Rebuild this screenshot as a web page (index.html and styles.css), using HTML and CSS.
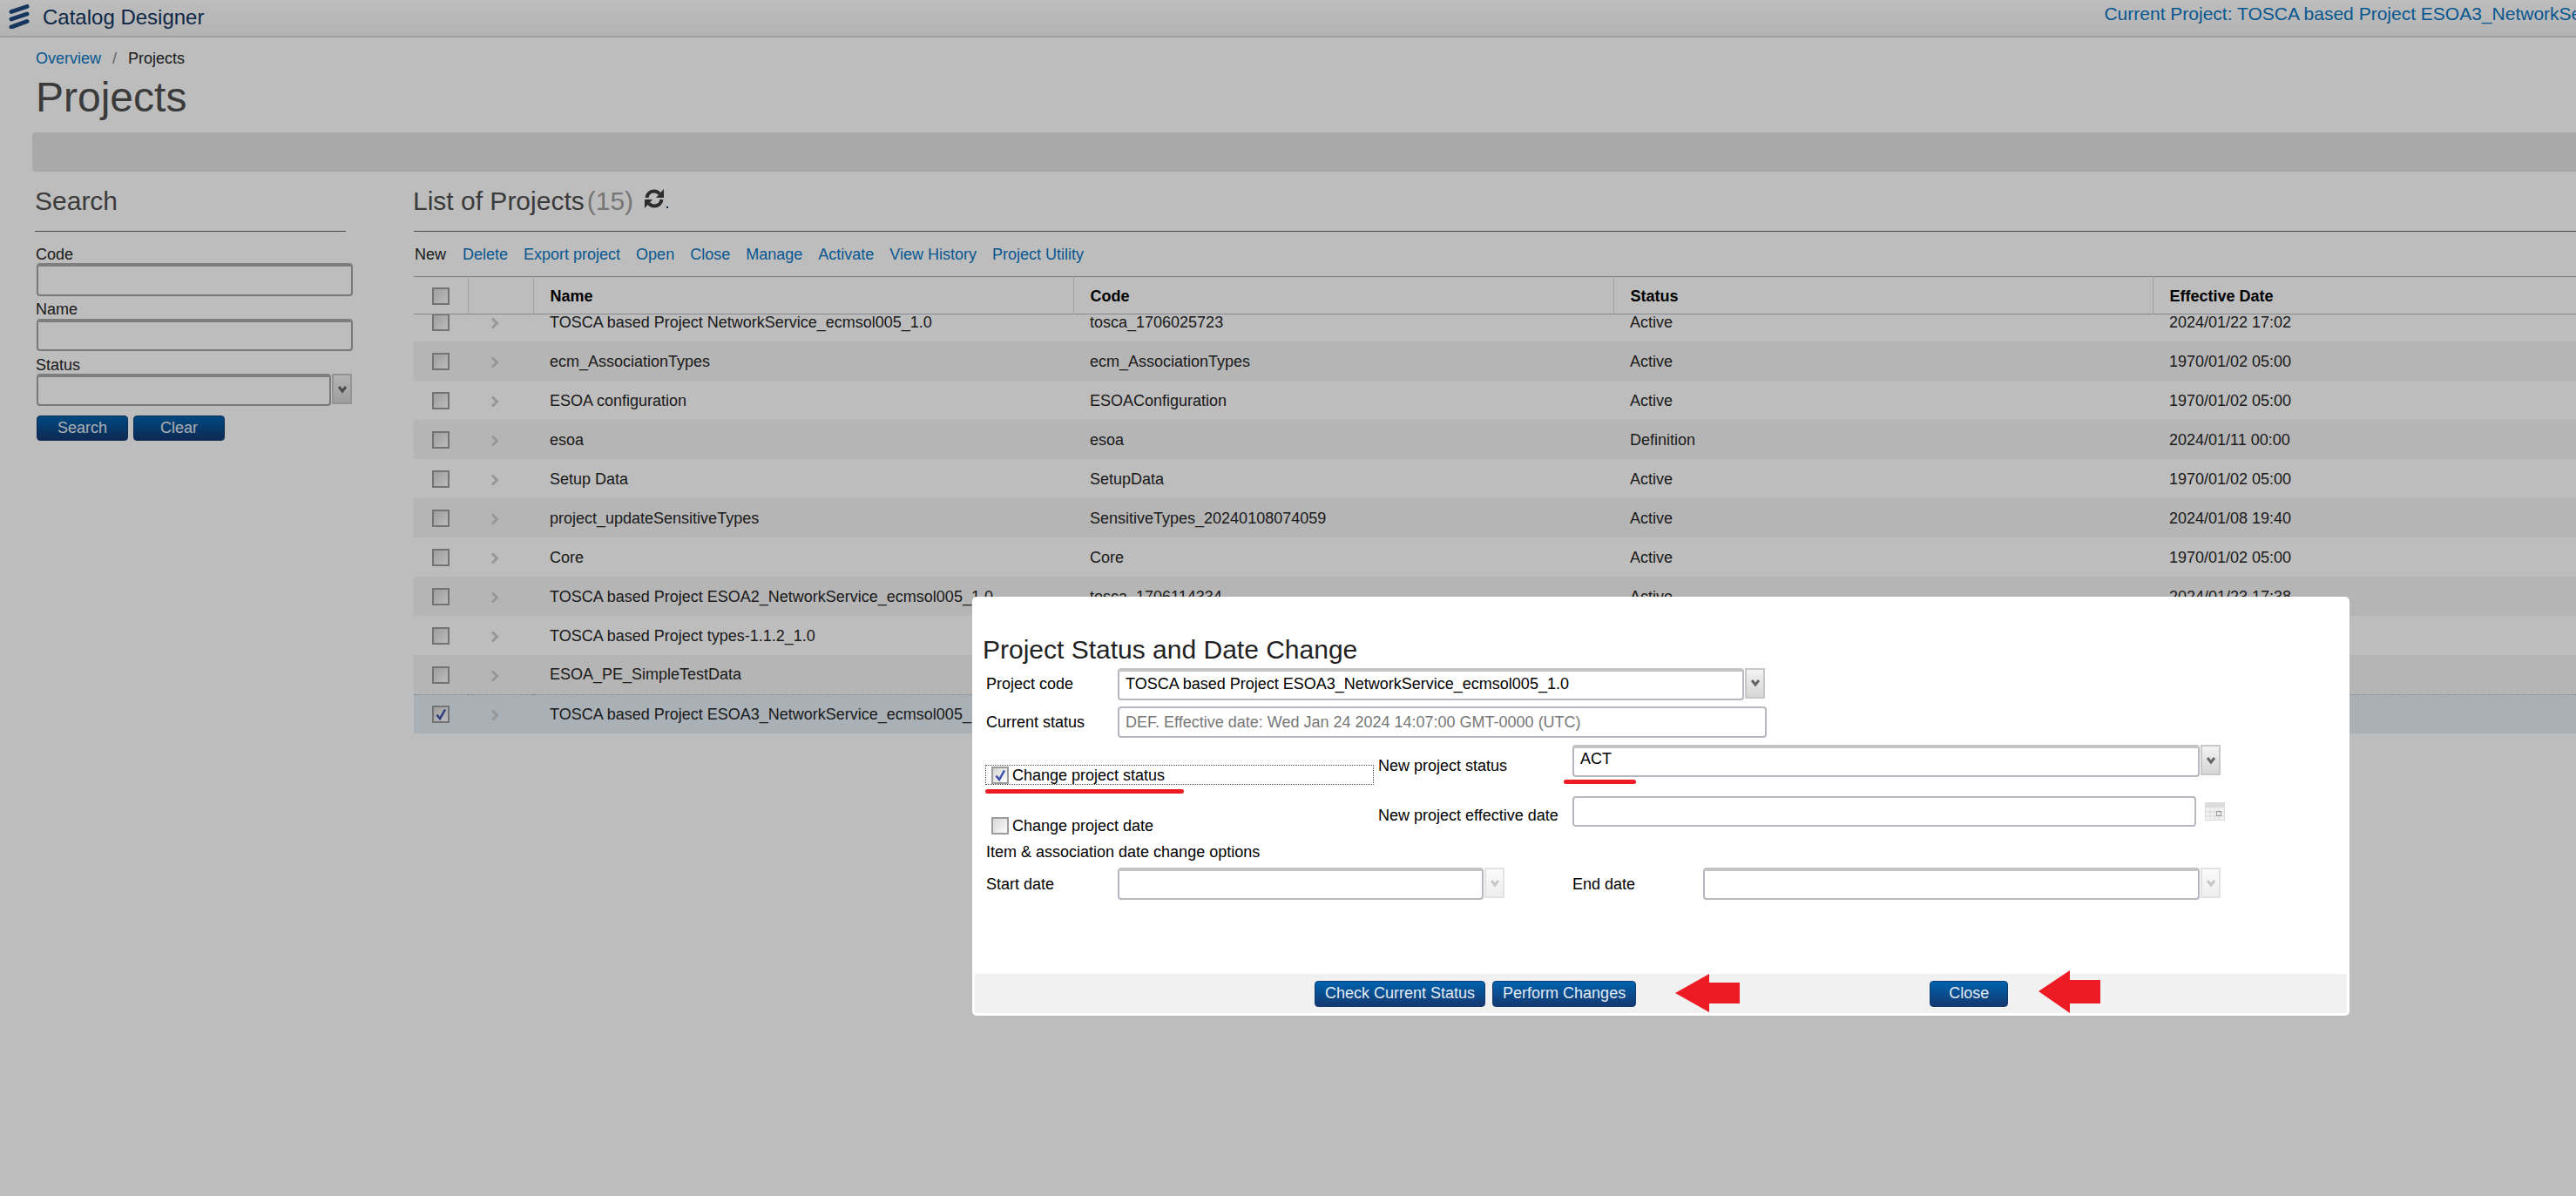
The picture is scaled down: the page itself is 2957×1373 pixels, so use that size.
FILE: index.html
```html
<!doctype html>
<html lang="en">
    <head>
        <meta charset="UTF-8" />
        <title>Catalog Designer</title>
        <link rel="stylesheet" href="styles.css">
    </head>
    <body>
        <header class="topbar">
            <svg class="logo" viewBox="0 0 24 28" width="24" height="28">
                <path d="M3 8.500 L21 2.500 M3 17 L21 11 M3 26 L21 19.500" />
            </svg>
            <span class="app-title">Catalog Designer</span>
            <a class="current-project">Current Project: TOSCA based Project ESOA3_NetworkService_ecmsol005_1.0</a>
        </header>

        <div class="page-title">
            <div class="breadcrumb"><a>Overview</a><span class="sep">/</span><span>Projects</span></div>
            <h1>Projects</h1>
        </div>
        <div class="info-bar"></div>

        <main class="content">
            <aside class="search">
                <h2>Search</h2>
                <label class="side-label">Code</label>
                <input class="field side-input inset" type="text" />
                <label class="side-label gap-name">Name</label>
                <input class="field side-input inset" type="text" />
                <label class="side-label gap-status">Status</label>
                <div class="combo side-combo">
                    <input class="field inset" type="text" />
                    <span class="arrow"><svg viewBox="0 0 12 10" width="12" height="10"><path d="M2 2 L6 7 L10 2" /></svg></span>
                </div>
                <div class="search-buttons">
                    <button type="button" class="btn wide">Search</button>
                    <button type="button" class="btn wide">Clear</button>
                </div>
            </aside>

            <section class="projects">
                <h2>List of Projects<span class="count">(15)</span>
                    <svg class="refresh" viewBox="0 0 22 22" width="22" height="22">
                        <path class="refresh-arc" d="M2.500 10 C3 5 7 2.500 11 2.500 C13.500 2.500 15.500 3.500 17 5.500" />
                        <path class="refresh-arc" d="M19.500 12 C19 17 15 19.500 11 19.500 C8.500 19.500 6.500 18.500 5 16.500" />
                        <path d="M22 0 V10 H13 Z M0 22 V12 H9 Z" />
                    </svg><i class="dot"></i>
                </h2>
                <nav class="toolbar">
                    <span>New</span>
                    <a>Delete</a>
                    <a>Export project</a>
                    <a>Open</a>
                    <a>Close</a>
                    <a>Manage</a>
                    <a>Activate</a>
                    <a>View History</a>
                    <a>Project Utility</a>
                </nav>

                <table class="grid grid-head">
                    <colgroup><col class="c-check"><col class="c-open"><col class="c-name"><col class="c-code"><col class="c-status"><col></colgroup>
                    <thead>
                        <tr>
                            <th class="mid"><span class="check"></span></th>
                            <th></th>
                            <th>Name</th>
                            <th>Code</th>
                            <th>Status</th>
                            <th>Effective Date</th>
                        </tr>
                    </thead>
                </table>
                <div class="grid-scroll">
                    <table class="grid grid-body">
                        <colgroup><col class="c-check"><col class="c-open"><col class="c-name"><col class="c-code"><col class="c-status"><col></colgroup>
                        <tbody>
                            <tr><td class="mid"><span class="check"></span></td><td class="mid chev-cell"><svg class="chev" viewBox="0 0 10 14" width="10" height="14"><path d="M2 1.500 L7.500 7 L2 12.500" /></svg></td><td>TOSCA based Project NetworkService_ecmsol005_1.0</td><td>tosca_1706025723</td><td>Active</td><td>2024/01/22 17:02</td></tr>
                            <tr><td class="mid"><span class="check"></span></td><td class="mid chev-cell"><svg class="chev" viewBox="0 0 10 14" width="10" height="14"><path d="M2 1.500 L7.500 7 L2 12.500" /></svg></td><td>ecm_AssociationTypes</td><td>ecm_AssociationTypes</td><td>Active</td><td>1970/01/02 05:00</td></tr>
                            <tr><td class="mid"><span class="check"></span></td><td class="mid chev-cell"><svg class="chev" viewBox="0 0 10 14" width="10" height="14"><path d="M2 1.500 L7.500 7 L2 12.500" /></svg></td><td>ESOA configuration</td><td>ESOAConfiguration</td><td>Active</td><td>1970/01/02 05:00</td></tr>
                            <tr><td class="mid"><span class="check"></span></td><td class="mid chev-cell"><svg class="chev" viewBox="0 0 10 14" width="10" height="14"><path d="M2 1.500 L7.500 7 L2 12.500" /></svg></td><td>esoa</td><td>esoa</td><td>Definition</td><td>2024/01/11 00:00</td></tr>
                            <tr><td class="mid"><span class="check"></span></td><td class="mid chev-cell"><svg class="chev" viewBox="0 0 10 14" width="10" height="14"><path d="M2 1.500 L7.500 7 L2 12.500" /></svg></td><td>Setup Data</td><td>SetupData</td><td>Active</td><td>1970/01/02 05:00</td></tr>
                            <tr><td class="mid"><span class="check"></span></td><td class="mid chev-cell"><svg class="chev" viewBox="0 0 10 14" width="10" height="14"><path d="M2 1.500 L7.500 7 L2 12.500" /></svg></td><td>project_updateSensitiveTypes</td><td>SensitiveTypes_20240108074059</td><td>Active</td><td>2024/01/08 19:40</td></tr>
                            <tr><td class="mid"><span class="check"></span></td><td class="mid chev-cell"><svg class="chev" viewBox="0 0 10 14" width="10" height="14"><path d="M2 1.500 L7.500 7 L2 12.500" /></svg></td><td>Core</td><td>Core</td><td>Active</td><td>1970/01/02 05:00</td></tr>
                            <tr><td class="mid"><span class="check"></span></td><td class="mid chev-cell"><svg class="chev" viewBox="0 0 10 14" width="10" height="14"><path d="M2 1.500 L7.500 7 L2 12.500" /></svg></td><td>TOSCA based Project ESOA2_NetworkService_ecmsol005_1.0</td><td>tosca_1706114334</td><td>Active</td><td>2024/01/23 17:38</td></tr>
                            <tr><td class="mid"><span class="check"></span></td><td class="mid chev-cell"><svg class="chev" viewBox="0 0 10 14" width="10" height="14"><path d="M2 1.500 L7.500 7 L2 12.500" /></svg></td><td>TOSCA based Project types-1.1.2_1.0</td><td></td><td></td><td></td></tr>
                            <tr><td class="mid"><span class="check"></span></td><td class="mid chev-cell"><svg class="chev" viewBox="0 0 10 14" width="10" height="14"><path d="M2 1.500 L7.500 7 L2 12.500" /></svg></td><td>ESOA_PE_SimpleTestData</td><td></td><td></td><td></td></tr>
                            <tr class="selected"><td class="mid"><span class="check checked"><svg viewBox="0 0 16 16" width="16" height="16"><path d="M3.500 8.500 L7 13 L13 2.500" /></svg></span></td><td class="mid chev-cell"><svg class="chev" viewBox="0 0 10 14" width="10" height="14"><path d="M2 1.500 L7.500 7 L2 12.500" /></svg></td><td>TOSCA based Project ESOA3_NetworkService_ecmsol005_1.0</td><td></td><td></td><td></td></tr>
                        </tbody>
                    </table>
                </div>
            </section>
        </main>

        <div class="overlay"></div>

        <div class="modal">
            <h3>Project Status and Date Change</h3>

            <div class="form-row">
                <label>Project code</label>
                <div class="combo code-combo">
                    <input class="field inset" type="text" value="TOSCA based Project ESOA3_NetworkService_ecmsol005_1.0" />
                    <span class="arrow"><svg viewBox="0 0 12 10" width="12" height="10"><path d="M2 2 L6 7 L10 2" /></svg></span>
                </div>
            </div>
            <div class="form-row second">
                <label>Current status</label>
                <input class="field status-field" type="text" value="DEF. Effective date: Wed Jan 24 2024 14:07:00 GMT-0000 (UTC)" />
            </div>

            <div class="options">
                <div class="options-left">
                    <div class="check-row focused">
                        <span class="check checked"><svg viewBox="0 0 16 16" width="16" height="16"><path d="M3.500 8.500 L7 13 L13 2.500" /></svg></span>
                        <span>Change project status</span>
                    </div>
                    <div class="check-row date-check">
                        <span class="check"></span>
                        <span>Change project date</span>
                    </div>
                </div>
                <div class="options-right">
                    <div class="wide-row">
                        <label>New project status</label>
                        <div class="combo act-combo">
                            <input class="field inset act-field" type="text" value="ACT" />
                            <span class="arrow"><svg viewBox="0 0 12 10" width="12" height="10"><path d="M2 2 L6 7 L10 2" /></svg></span>
                        </div>
                    </div>
                    <div class="wide-row date-row">
                        <label>New project effective date</label>
                        <input class="field date-field" type="text" />
                        <svg class="calendar" viewBox="0 0 23 21" width="23" height="21">
                            <rect width="23" height="21" fill="#dcdcdc" />
                            <rect x="1" y="6" width="21" height="14" fill="#f2f2f2" />
                            <path d="M6 6 V20 M11 6 V20 M16 6 V20 M1 11 H22 M1 16 H22" stroke="#d8d8d8" fill="none" />
                            <rect x="13.500" y="10.500" width="5" height="5" fill="none" stroke="#9a9a9a" />
                        </svg>
                    </div>
                </div>
            </div>

            <div class="item-title">Item &amp; association date change options</div>
            <div class="dates">
                <label>Start date</label>
                <div class="combo start-combo off">
                    <input class="field inset" type="text" />
                    <span class="arrow"><svg viewBox="0 0 12 10" width="12" height="10"><path d="M2 2 L6 7 L10 2" /></svg></span>
                </div>
                <label class="end-label">End date</label>
                <div class="combo end-combo off">
                    <input class="field inset" type="text" />
                    <span class="arrow"><svg viewBox="0 0 12 10" width="12" height="10"><path d="M2 2 L6 7 L10 2" /></svg></span>
                </div>
            </div>

            <div class="modal-footer">
                <button type="button" class="btn">Check Current Status</button>
                <button type="button" class="btn">Perform Changes</button>
                <button type="button" class="btn close-btn">Close</button>
            </div>

            <!-- red marks drawn on top of the dialog -->
            <i class="mark mark-status"></i>
            <i class="mark mark-act"></i>
            <svg class="pointer pointer-one" viewBox="0 0 74 44" width="74" height="44"><polygon points="0,22 39,0 39,10 74,10 74,34 39,34 39,44" /></svg>
            <svg class="pointer pointer-two" viewBox="0 0 71 49" width="71" height="49"><polygon points="0,24 36,0 36,11 71,11 71,38 36,38 36,49" /></svg>
        </div>
    </body>
</html>
```

FILE: styles.css
```css
* {
    box-sizing: border-box;
    margin: 0;
    padding: 0;
}

html, body {
    height: 100%;
    overflow: hidden;
}

body {
    font-family: "Liberation Sans", Arial, sans-serif;
    font-size: 18px;
    line-height: 20px;
    color: #262626;
    background-color: #fff;
}

a {
    color: #0a76c4;
}

/* top bar */
.topbar {
    height: 43px;
    display: flex;
    align-items: center;
    padding-left: 10px;
    white-space: nowrap;
    background: linear-gradient(#ffffff, #f2f2f2);
    border-bottom: 2px solid #d8d8d8;
}

.logo {
    flex-shrink: 0;
    margin-top: -3px;
}

.logo path {
    fill: none;
    stroke: #1f4a80;
    stroke-width: 5;
    stroke-linecap: round;
}

.app-title {
    margin-left: 15px;
    margin-top: -2px;
    font-size: 24px;
    color: #12355f;
}

.current-project {
    flex-shrink: 0;
    margin-left: 2181px;
    margin-top: -9px;
    font-size: 21px;
}

/* page title */
.page-title {
    padding: 14px 0 0 41px;
}

.breadcrumb a {
    color: #0a76c4;
}

.breadcrumb .sep {
    margin: 0 13px;
    color: #888;
}

h1 {
    margin-top: 7px;
    font-size: 48px;
    font-weight: normal;
    line-height: 56px;
    color: #505050;
}

.info-bar {
    height: 45px;
    margin: 12px 0 0 37px;
    border-radius: 4px 0 0 4px;
    background-color: #e4e4e4;
}

/* search and list */
.content {
    display: flex;
    gap: 78px;
    padding: 15px 0 0 40px;
}

h2 {
    height: 54px;
    font-size: 30px;
    font-weight: normal;
    line-height: 38px;
    color: #505050;
    border-bottom: 1px solid #666;
}

.search {
    flex: 0 0 357px;
    min-width: 0;
}

.side-label {
    display: block;
    margin: 16px 0 0 1px;
}

.side-label.gap-name {
    margin-top: 5px;
    height: 21px;
}

.side-label.gap-status {
    margin-top: 6px;
}

.side-input {
    display: block;
    width: 363px;
    height: 38px;
    margin-left: 2px;
}

.field {
    font-family: inherit;
    font-size: 18px;
    color: #000;
    padding: 0 7px;
    background-color: #fff;
    border: 2px solid #b5b8be;
    border-radius: 4px;
    outline: none;
}

.inset {
    border-top: 4px solid #c4c4c4;
    padding-bottom: 2px;
}

.search .field {
    border-color: #a4a4a4;
    border-top-color: #ababab;
}

.side-input.inset + .side-label + .side-input {
    height: 37px;
}

.combo {
    display: flex;
    align-items: flex-start;
}

.combo .field {
    flex: 1;
    min-width: 0;
    height: 37px;
}

.arrow {
    flex: 0 0 23px;
    height: 35px;
    margin-left: 1px;
    display: flex;
    align-items: center;
    justify-content: center;
    background: linear-gradient(#f2f2f2, #d6d6d6);
    border: 2px solid #c8c8c8;
}

.arrow path {
    fill: none;
    stroke: #666;
    stroke-width: 3;
}

.off .arrow {
    background: linear-gradient(#fafafa, #eeeeee);
    border-color: #e2e2e2;
}

.off .arrow path {
    stroke: #c8c8c8;
}

.side-combo {
    width: 362px;
    margin-left: 2px;
}

.search-buttons {
    display: flex;
    gap: 6px;
    margin: 11px 0 0 2px;
}

.btn {
    height: 30px;
    padding: 0 11px;
    font-family: inherit;
    font-size: 18px;
    color: #e4eaf1;
    background: linear-gradient(#0062ae, #143870);
    border: 1px solid #123a70;
    border-radius: 4px;
}

.btn.wide {
    width: 105px;
    padding: 0;
    height: 29px;
}

.projects {
    flex: 1;
    min-width: 0;
}

.projects h2 {
    text-indent: -1px;
}

.count {
    margin-left: 3px;
    color: #a0a0a0;
}

.refresh {
    margin-left: 5px;
    vertical-align: 2px;
    fill: #3a3a3a;
}

.refresh-arc {
    fill: none;
    stroke: #3a3a3a;
    stroke-width: 4;
}

.dot {
    display: inline-block;
    width: 2px;
    height: 2px;
    margin-left: 3px;
    vertical-align: 2px;
    background-color: #12355f;
}

.toolbar {
    display: flex;
    gap: 18px;
    height: 51px;
    padding: 16px 0 0 1px;
    white-space: nowrap;
}

.toolbar a:first-of-type {
    margin-left: 1px;
}

/* project table */
.grid {
    width: 100%;
    border-collapse: collapse;
    table-layout: fixed;
}

.c-check { width: 62px; }
.c-open { width: 75px; }
.c-name { width: 620px; }
.c-code { width: 620px; }
.c-status { width: 619px; }

.grid-head {
    height: 44px;
    border-top: 1px solid #aaa;
    border-bottom: 1px solid #b4b8c2;
}

.grid-head th {
    padding: 2px 19px 0;
    text-align: left;
    color: #000;
    border-left: 1px solid #d8d8d8;
}

.grid-head th:first-child {
    border-left: none;
}

.grid-scroll {
    height: 481px;
    overflow: hidden;
}

.grid-body {
    margin-top: -14px;
}

.grid-body tr {
    height: 45px;
}

.grid-body tr:nth-child(even) {
    background-color: #f5f5f5;
}

.grid-body td {
    padding: 0 19px;
    white-space: nowrap;
}

.grid-body tr.selected {
    background-color: #e5eef6;
    border-top: 1px dotted #a8b2bc;
}

.grid td.mid, .grid th.mid {
    padding: 0;
    text-align: center;
}

.grid td.chev-cell {
    padding-right: 14px;
}

.check {
    display: inline-block;
    flex-shrink: 0;
    width: 20px;
    height: 20px;
    vertical-align: middle;
    background: linear-gradient(135deg, #d6d6d6, #fdfdfd);
    border: 2px solid #9c9c9c;
}

.check svg {
    display: block;
}

.check svg path {
    fill: none;
    stroke: #3d4fa8;
    stroke-width: 2.500;
}

.chev {
    vertical-align: middle;
}

.chev path {
    fill: none;
    stroke: #cccccc;
    stroke-width: 3;
}

/* dialog */
.overlay {
    position: fixed;
    inset: 0;
    background-color: rgba(0, 0, 0, 0.26);
}

.modal {
    position: absolute;
    left: 1116px;
    top: 685px;
    width: 1581px;
    height: 481px;
    padding: 43px 0 0 16px;
    color: #000;
    background-color: #fff;
    border-radius: 5px;
}

h3 {
    margin: 0 0 3px -4px;
    font-size: 30px;
    font-weight: normal;
    line-height: 36px;
    color: #222;
}

.form-row {
    display: flex;
    align-items: center;
    height: 36px;
}

.form-row.second {
    margin-top: 8px;
}

.form-row label {
    flex: 0 0 151px;
}

.code-combo {
    width: 743px;
}

.status-field {
    width: 745px;
    height: 36px;
    color: #777;
}

.options {
    display: flex;
    margin: 8px 0 0 -1px;
}

.options-left {
    flex: 0 0 451px;
    padding-top: 23px;
}

.check-row {
    display: flex;
    align-items: center;
    gap: 4px;
    width: 446px;
    height: 23px;
    padding-left: 7px;
}

.check-row.focused {
    border: 1px dotted #444;
    padding-left: 6px;
}

.check-row.date-check {
    margin-top: 35px;
}

.wide-row {
    display: flex;
    align-items: center;
    height: 37px;
}

.wide-row label {
    flex: 0 0 223px;
    padding-top: 11px;
}

.act-combo {
    width: 744px;
}

.act-field {
    padding-bottom: 6px;
}

.date-row {
    height: 35px;
    margin-top: 22px;
}

.date-row label {
    padding-top: 9px;
}

.date-field {
    width: 716px;
    height: 35px;
}

.calendar {
    margin-left: 10px;
}

.item-title {
    margin-top: 9px;
    height: 20px;
}

.dates {
    display: flex;
    align-items: center;
    height: 37px;
    margin-top: 8px;
}

.dates label {
    flex: 0 0 151px;
}

.start-combo {
    flex: 0 0 444px;
}

.dates .end-label {
    flex: 0 0 150px;
    margin-left: 78px;
}

.end-combo {
    flex: 0 0 594px;
}

.modal-footer {
    position: absolute;
    left: 3px;
    right: 3px;
    bottom: 3px;
    height: 45px;
    display: flex;
    align-items: center;
    gap: 8px;
    padding-left: 390px;
    background-color: #f1f1f1;
}

.close-btn {
    margin-left: 329px;
    width: 90px;
    padding: 0;
}

.mark {
    position: absolute;
    height: 5px;
    border-radius: 3px;
    background-color: #ed1c24;
}

.mark-status {
    left: 15px;
    top: 221px;
    width: 228px;
}

.mark-act {
    left: 679px;
    top: 210px;
    width: 83px;
}

.pointer {
    position: absolute;
    fill: #ed1c24;
}

.pointer-one {
    left: 807px;
    top: 433px;
}

.pointer-two {
    left: 1224px;
    top: 429px;
}
```
